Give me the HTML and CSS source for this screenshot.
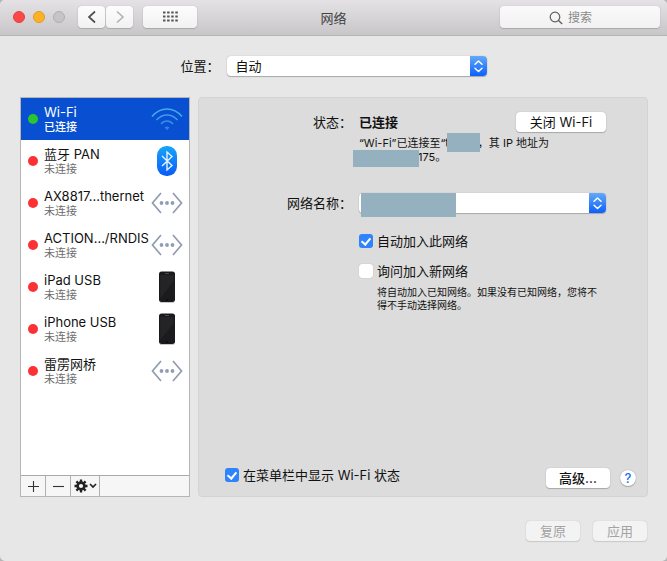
FILE: index.html
```html
<!DOCTYPE html>
<html lang="zh-CN">
<head>
<meta charset="utf-8">
<meta name="viewport" content="width=device-width, initial-scale=1">
<title>网络</title>
<link rel="stylesheet" href="styles.css">
</head>
<body>
<svg class="defs" aria-hidden="true">
  <symbol id="stepper" viewBox="0 0 17 20">
    <path d="M5 8.200 8.500 5 12 8.200M5 12.300l3.500 3.200 3.500-3.200" fill="none" stroke="#fff" stroke-width="1.500" stroke-linecap="round" stroke-linejoin="round"/>
  </symbol>
  <symbol id="ethernet" viewBox="0 0 32 22">
    <path d="M10 1 1.500 11 10 21M22 1l8.500 10L22 21" fill="none" stroke="#8f9cb0" stroke-width="1.700"/>
    <g fill="#909db2"><circle cx="10.500" cy="11" r="1.900"/><circle cx="16" cy="11" r="1.900"/><circle cx="21.500" cy="11" r="1.900"/></g>
  </symbol>
  <symbol id="phone" viewBox="0 0 18 32">
    <rect x="1" y="0.500" width="16" height="30.500" rx="2.500" fill="#191a1e"/>
    <rect x="2.200" y="4" width="13.600" height="23" fill="#242426"/>
    <path d="M2.200 27 15.800 10v17z" fill="#1b1b1d"/>
    <path d="M7 2.500h4" stroke="#555963" stroke-width="0.800"/>
    <circle cx="9" cy="29" r="1.100" fill="#0c0c0e"/>
    <path d="M2 31.500h14" stroke="#bbb" stroke-width="0.800"/>
  </symbol>
</svg>
<div class="window">
  <header class="toolbar">
    <div class="traffic">
      <button class="light close" aria-label="关闭"></button>
      <button class="light minimize" aria-label="最小化"></button>
      <button class="light zoom" aria-label="缩放" disabled></button>
    </div>
    <nav class="history">
      <button class="tool nav" aria-label="后退"><svg width="10" height="14" viewBox="0 0 10 14"><path d="M8 1.500 2 7l6 5.500" fill="none" stroke="#505050" stroke-width="1.700"/></svg></button>
      <button class="tool nav" aria-label="前进" disabled><svg width="10" height="14" viewBox="0 0 10 14"><path d="m2 1.500 6 5.500-6 5.500" fill="none" stroke="#b0b0b0" stroke-width="1.500"/></svg></button>
    </nav>
    <button class="tool all" aria-label="显示全部"><svg width="15" height="11" viewBox="0 0 15 11"><path d="M0 1.500h15M0 5.500h15M0 9.500h15" stroke="#555" stroke-width="2" stroke-dasharray="2.500 1.600"/></svg></button>
    <h1 class="title">网络</h1>
    <label class="search">
      <svg width="14" height="14" viewBox="0 0 14 14"><circle cx="6" cy="6" r="4.800" fill="none" stroke="#606060" stroke-width="1.200"/><path d="m9.500 9.500 3.700 3.500" stroke="#606060" stroke-width="1.400"/></svg>
      <input type="text" placeholder="搜索" aria-label="搜索">
    </label>
  </header>

  <div class="location">
    <label class="label" for="location">位置：</label>
    <div class="popup location-popup">
      <select id="location"><option>自动</option></select>
      <svg class="stepper"><use href="#stepper"/></svg>
    </div>
  </div>

  <main class="content">
    <aside class="sidebar">
      <ul class="services">
        <li class="service selected"><i class="dot on"></i><div class="names"><b>Wi-Fi</b><small>已连接</small></div>
          <svg width="32" height="24" viewBox="0 0 32 24"><g fill="none" stroke-width="1.500"><path d="M1 9.500Q7.500 2 16 2t15 7.500" stroke="#49a9ee"/><path d="M5.500 13Q10 8 16 8t10.500 5" stroke="#3d9cec"/><path d="M10 17q2.500-3 6-3t6 3" stroke="#338eea"/></g><path d="M13.500 20.500q2.500-2 5 0L16 23z" fill="#2e83e8"/></svg></li>
        <li class="service"><i class="dot"></i><div class="names"><b>蓝牙 PAN</b><small>未连接</small></div>
          <svg width="32" height="32" viewBox="0 0 32 32"><defs><linearGradient id="bt" x2="0" y2="1"><stop stop-color="#18a5f9"/><stop offset="1" stop-color="#0a5bf5"/></linearGradient></defs><rect x="6" y="1" width="20" height="30" rx="9.500" fill="url(#bt)"/><path d="m11 11 10 9.500-5 4.500V7l5 4.500L11 21" fill="none" stroke="#e5f3ff" stroke-width="1.400"/></svg></li>
        <li class="service"><i class="dot"></i><div class="names"><b>AX8817...thernet</b><small>未连接</small></div><svg width="32" height="22"><use href="#ethernet"/></svg></li>
        <li class="service"><i class="dot"></i><div class="names"><b>ACTION.../RNDIS</b><small>未连接</small></div><svg width="32" height="22"><use href="#ethernet"/></svg></li>
        <li class="service"><i class="dot"></i><div class="names"><b>iPad USB</b><small>未连接</small></div><svg width="32" height="32"><use href="#phone"/></svg></li>
        <li class="service"><i class="dot"></i><div class="names"><b>iPhone USB</b><small>未连接</small></div><svg width="32" height="32"><use href="#phone"/></svg></li>
        <li class="service"><i class="dot"></i><div class="names"><b>雷雳网桥</b><small>未连接</small></div><svg width="32" height="22"><use href="#ethernet"/></svg></li>
      </ul>
      <div class="actions">
        <button aria-label="添加"><svg width="11" height="11" viewBox="0 0 11 11"><path d="M5.500 0v11M0 5.500h11" stroke="#333" stroke-width="1.100"/></svg></button>
        <button aria-label="移除"><svg width="11" height="11" viewBox="0 0 11 11"><path d="M0 5.500h11" stroke="#333" stroke-width="1.100"/></svg></button>
        <button class="gear" aria-label="更多操作"><svg width="23" height="14" viewBox="0 0 23 14"><circle cx="7" cy="7" r="3.400" fill="none" stroke="#222" stroke-width="2.600"/><path d="M7 .5v2.500M7 11v2.500M.5 7H3M11 7h2.500M2.400 2.400l1.800 1.800M9.800 9.800l1.800 1.800M2.400 11.600l1.800-1.800M9.800 4.200l1.800-1.800" stroke="#222" stroke-width="2.300"/><path d="m16 5 3 3 3-3" fill="none" stroke="#222" stroke-width="1.700"/></svg></button>
      </div>
    </aside>

    <section class="panel">
      <div class="form">
        <span class="label">状态：</span>
        <div class="status">
          <div class="status-head"><strong>已连接</strong><button class="push wifi">关闭 Wi-Fi</button></div>
          <p class="note">“Wi-Fi”已连接至“t<span class="mask name"></span>，其 IP 地址为<br><span class="mask address"></span>175。</p>
        </div>
        <label class="label" for="network">网络名称：</label>
        <div class="popup network">
          <select id="network"><option></option></select>
          <svg class="stepper"><use href="#stepper"/></svg>
          <span class="mask ssid"></span>
        </div>
        <div class="options">
          <label class="check"><input type="checkbox" checked>自动加入此网络</label>
          <label class="check"><input type="checkbox">询问加入新网络</label>
          <p class="hint">将自动加入已知网络。如果没有已知网络，您将不<br>得不手动选择网络。</p>
        </div>
      </div>
      <div class="panel-foot">
        <label class="check"><input type="checkbox" checked>在菜单栏中显示 Wi-Fi 状态</label>
        <button class="push advanced">高级...</button>
        <button class="help" aria-label="帮助">?</button>
      </div>
    </section>
  </main>

  <footer class="footer">
    <button class="push" disabled>复原</button>
    <button class="push" disabled>应用</button>
  </footer>
</div>
</body>
</html>
```
FILE: styles.css
```css
*, ::before { box-sizing: border-box; }

body {
  margin: 0;
  background: #b4b4b6;
  color: #111;
  font: 13px/20px Inter, "Noto Sans CJK SC", sans-serif;
}

button, input, select { margin: 0; padding: 0; border: 0; color: inherit; font: inherit; }
svg { display: block; flex: none; }
p, h1, ul { margin: 0; padding: 0; }
.defs { position: absolute; width: 0; height: 0; }

.window {
  display: flex;
  flex-direction: column;
  min-height: 100vh;
  border-radius: 5px;
  background: #e7e7e7;
  overflow: hidden;
}

/* Toolbar */
.toolbar {
  display: grid;
  grid-template-columns: auto auto auto 1fr 160px;
  align-items: center;
  height: 36px;
  padding: 0 7px 2px 13px;
  border-bottom: 1px solid #b4b2b5;
  background: linear-gradient(#e4e2e5, #c9c6ca);
  position: relative;
}
.traffic { display: flex; gap: 8px; margin-right: 13px; }
.light { width: 12px; height: 12px; border: 1px solid #e2403d; border-radius: 50%; background: #fc4848; }
.minimize { border-color: #e39b1e; background: #fdb225; }
.zoom { border-color: #b0afb0; background: #c5c5c5; }
.history { display: flex; gap: 1px; margin-right: 10px; }
.tool {
  display: flex;
  align-items: center;
  justify-content: center;
  height: 22px;
  border-radius: 4px;
  background: linear-gradient(#fdfdfd, #f1f1f1);
  box-shadow: 0 0 1px #999, 0 1px 1px #aaa;
}
.nav { width: 27px; }
.all { width: 54px; }
.title {
  position: absolute;
  inset: 8px 0 auto;
  color: #444;
  font-size: 13px;
  font-weight: 400;
  text-align: center;
  pointer-events: none;
}
.search { position: relative; grid-column: 5; height: 22px; }
.search svg { position: absolute; top: 5px; left: calc(50% - 31px); }
.search input {
  width: 100%;
  height: 22px;
  padding-top: 2px;
  border-radius: 4px;
  background: linear-gradient(#fafafa, #f1f1f1);
  box-shadow: 0 0 1px #999, 0 1px 1px #aaa;
  font-size: 12px;
  text-align: center;
}
.search input::placeholder { color: #8b8b8b; }

/* Pop-up menus */
.popup { position: relative; height: 20px; }
.popup select {
  width: 100%;
  height: 20px;
  padding: 0 24px 0 9px;
  border-radius: 4px;
  background: #fff;
  box-shadow: 0 0 1px #999, 0 1px 1px #aaa;
  line-height: 20px;
  appearance: none;
}
.stepper {
  position: absolute;
  top: 0;
  right: 0;
  width: 17px;
  height: 20px;
  border-radius: 0 4px 4px 0;
  background: linear-gradient(#64a9f8, #0b60fb);
  pointer-events: none;
}
.location { display: flex; justify-content: center; gap: 7px; padding: 20px 0 21px; }
.location-popup { width: 260px; }
.label { font-family: "Noto Sans CJK SC", sans-serif; text-align: right; white-space: nowrap; }

/* Service list */
.content { display: grid; flex: 1; grid-template-columns: 170px 1fr; gap: 8px; padding: 0 19px 0 20px; }
.sidebar { display: flex; flex-direction: column; border: 1px solid #b5b5b5; background: #fff; }
.services { flex: 1; list-style: none; }
.service { display: flex; align-items: center; height: 42px; padding: 0 6px 0 7px; }
.selected { background: #0850d1; color: #fff; }
.dot { flex: none; width: 10px; height: 10px; margin-right: 6px; border-radius: 50%; background: #fc3135; }
.on { background: #2ac52f; }
.names { flex: 1; min-width: 0; white-space: nowrap; }
.names b { display: block; font-size: 13px; font-weight: 400; line-height: 15px; }
.names small { display: block; color: #6d6d6d; font-size: 11px; line-height: 14px; }
.selected .names small { color: #fff; font-weight: 500; }
.actions { display: flex; height: 21px; border-top: 1px solid #aaa; background: #f6f6f6; }
.actions button {
  display: flex;
  align-items: center;
  justify-content: center;
  width: 25px;
  border-right: 1px solid #b0b0b0;
  background: none;
}
.actions .gear { width: 29px; }

/* Settings panel */
.panel {
  display: flex;
  flex-direction: column;
  border: 1px solid #d3d3d3;
  border-radius: 4px;
  background: #dcdcdc;
}
.form { display: grid; grid-template-columns: 153px 1fr; column-gap: 7px; padding: 14px 41px 0 0; }
.status { margin-bottom: 29px; }
.status-head { display: flex; justify-content: space-between; }
.status-head strong { font-weight: 700; }
.note { margin-top: 4px; font-size: 11px; line-height: 14px; white-space: nowrap; }
.mask { display: inline-block; position: relative; background: #95b1c0; vertical-align: middle; }
.name { width: 33px; height: 19px; margin: -6px -2px -2px -2px; }
.address { width: 66px; height: 17px; margin: -3px -1px -3px -6px; }
.ssid { position: absolute; top: 0; left: 2px; width: 95px; height: 24px; }
.options { display: grid; grid-column: 2; padding-top: 18px; }
.check { display: flex; align-items: center; gap: 4px; white-space: nowrap; }
.options .check + .check { margin-top: 10px; }
.check input {
  width: 14px;
  height: 14px;
  border-radius: 3px;
  background: #fff;
  box-shadow: 0 0 1px #999;
  appearance: none;
}
.check input:checked { display: flex; align-items: flex-start; justify-content: center; padding-top: 2px; background: #2f84fc; box-shadow: none; }
.check input:checked::before {
  content: "";
  width: 6px;
  height: 9px;
  border: solid #fff;
  border-width: 0 2px 2px 0;
  transform: rotate(40deg);
}
.hint { margin: 5px 0 0 18px; font-size: 10px; line-height: 13px; white-space: nowrap; }
.panel-foot { display: flex; align-items: flex-start; margin-top: auto; padding: 0 11px 8px 26px; }
.panel-foot .check { line-height: 14px; }
.push {
  width: 54px;
  height: 20px;
  border-radius: 4px;
  background: #fff;
  box-shadow: 0 0 1px #999, 0 1px 1px #aaa;
  line-height: 20px;
}
.wifi { width: 90px; }
.advanced { width: 64px; margin: 0 10px 0 auto; font-weight: 500; }
.help {
  width: 16px;
  height: 16px;
  margin-top: 2px;
  border-radius: 50%;
  background: #fff;
  box-shadow: 0 0 1px #888, 0 1px 1px #aaa;
  color: #1670f5;
  font-weight: 500;
  line-height: 16px;
}

.footer { display: flex; justify-content: flex-end; gap: 13px; padding: 24px 20px 20px; }
.footer .push { background: #f3f3f3; box-shadow: 0 0 1px #aaa, 0 1px 1px #ccc; color: #a3a3a3; }
```
